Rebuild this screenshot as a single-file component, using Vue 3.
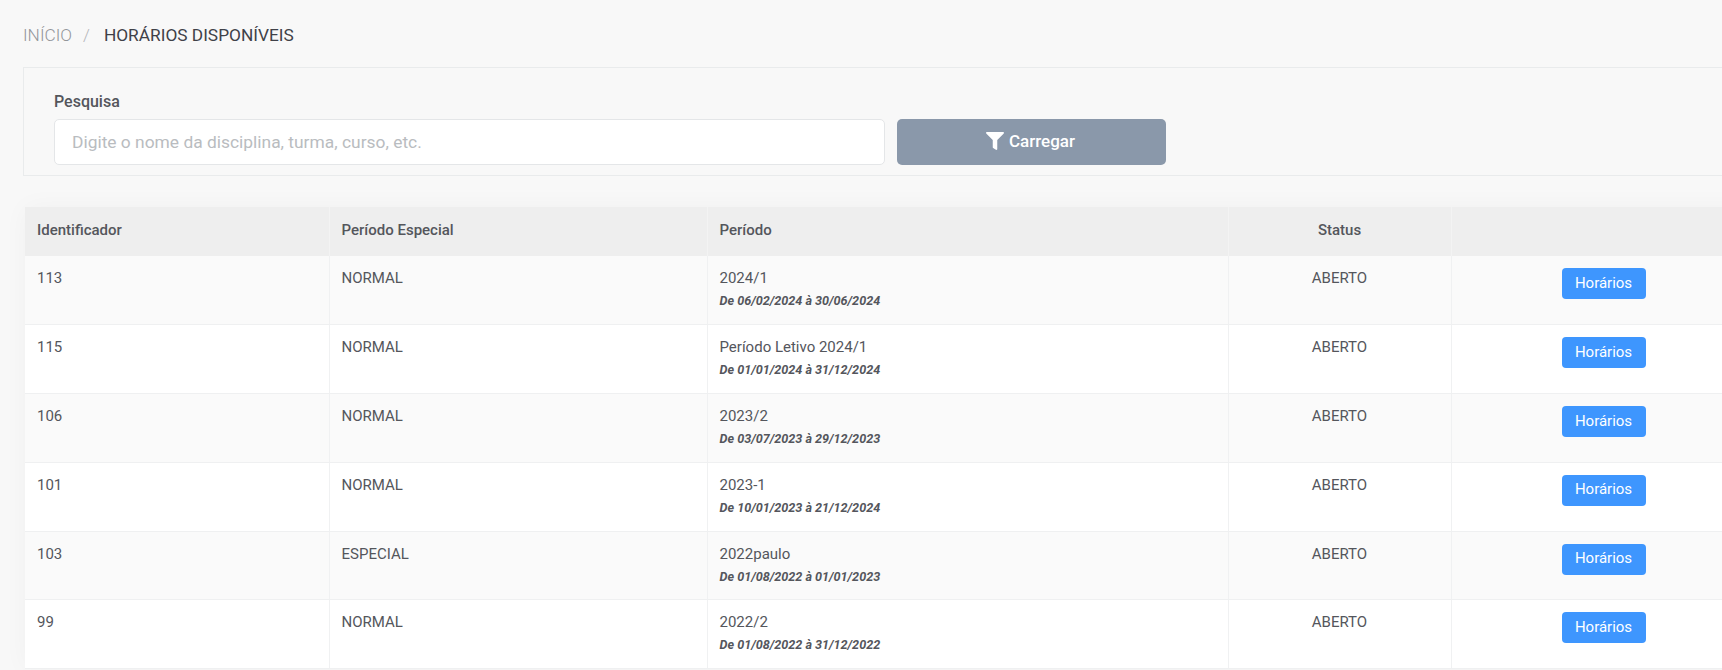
<script setup>
const rows = [
  { id: '113', tipo: 'NORMAL', periodo: '2024/1', datas: 'De 06/02/2024 à 30/06/2024' },
  { id: '115', tipo: 'NORMAL', periodo: 'Período Letivo 2024/1', datas: 'De 01/01/2024 à 31/12/2024' },
  { id: '106', tipo: 'NORMAL', periodo: '2023/2', datas: 'De 03/07/2023 à 29/12/2023' },
  { id: '101', tipo: 'NORMAL', periodo: '2023-1', datas: 'De 10/01/2023 à 21/12/2024' },
  { id: '103', tipo: 'ESPECIAL', periodo: '2022paulo', datas: 'De 01/08/2022 à 01/01/2023' },
  { id: '99', tipo: 'NORMAL', periodo: '2022/2', datas: 'De 01/08/2022 à 31/12/2022' },
]
</script>

<template>
  <div class="page">
    <nav class="crumbs">
      <span class="crumb-link">INÍCIO</span>
      <span class="crumb-sep">/</span>
      <span class="crumb-current">HORÁRIOS DISPONÍVEIS</span>
    </nav>

    <section class="panel">
      <label class="label" for="busca">Pesquisa</label>
      <div class="search-row">
        <input id="busca" class="input" type="text" placeholder="Digite o nome da disciplina, turma, curso, etc." />
        <button class="load" type="button">
          <svg class="filter" viewBox="0 0 512 512" aria-hidden="true">
            <path fill="currentColor" d="M487.976 0H24.028C2.71 0-8.047 25.866 7.058 40.971L192 225.941V432c0 7.831 3.821 15.17 10.237 19.662l80 55.98C298.02 518.69 320 507.493 320 487.98V225.941l184.947-184.97C520.021 25.896 509.338 0 487.976 0z" />
          </svg>
          <span>Carregar</span>
        </button>
      </div>
    </section>

    <table class="grid">
      <colgroup>
        <col class="c1" /><col class="c2" /><col class="c3" /><col class="c4" /><col class="c5" />
      </colgroup>
      <thead>
        <tr>
          <th>Identificador</th>
          <th>Período Especial</th>
          <th>Período</th>
          <th class="center">Status</th>
          <th></th>
        </tr>
      </thead>
      <tbody>
        <tr v-for="r in rows" :key="r.id">
          <td>{{ r.id }}</td>
          <td>{{ r.tipo }}</td>
          <td>
            <div>{{ r.periodo }}</div>
            <div class="dates">{{ r.datas }}</div>
          </td>
          <td class="center">ABERTO</td>
          <td class="center"><button class="hours" type="button">Horários</button></td>
        </tr>
      </tbody>
    </table>
  </div>
</template>

<style>
html, body { margin: 0; background: #f8f8f8; overflow: hidden; }
</style>

<style scoped>
.page {
  width: 1722px;
  height: 670px;
  overflow: hidden;
  background: #f8f8f8;
  font-family: Roboto, "Liberation Sans", sans-serif;
  font-size: 15px;
  color: #54565c;
}
.crumbs {
  display: flex;
  align-items: center;
  height: 21px;
  padding: 24px 0 22px 23px;
  font-size: 17.3px;
  font-weight: 300;
}
.crumb-link { color: #93969a; }
.crumb-sep { color: #b4b6b9; margin: 0 14px 0 11px; }
.crumb-current { color: #3f4148; font-weight: 400; }
.panel {
  box-sizing: border-box;
  width: 1760px;
  height: 109px;
  margin-left: 23px;
  padding: 23px 0 0 30px;
  border: 1px solid #e9ebec;
}
.label {
  display: block;
  height: 28px;
  font-size: 16px;
  font-weight: 500;
  line-height: 22px;
}
.search-row { display: flex; gap: 12px; }
.input {
  box-sizing: border-box;
  width: 831px;
  height: 46px;
  padding: 0 17px;
  background: #fff;
  border: 1px solid #e4e6e8;
  border-radius: 5px;
  font-family: inherit;
  font-size: 17.4px;
  color: #54565c;
  outline: none;
}
.input::placeholder { color: #b9bcc0; opacity: 1; }
.load {
  display: flex;
  align-items: center;
  justify-content: center;
  gap: 5px;
  box-sizing: border-box;
  width: 269px;
  height: 46px;
  padding: 0 2px 2px 0;
  background: #8a98aa;
  border: 0;
  border-radius: 5px;
  font-family: inherit;
  font-size: 17px;
  font-weight: 500;
  color: #fff;
}
.filter { width: 18px; height: 18px; }
.grid {
  width: 1731px;
  margin: 31px 0 0 25px;
  table-layout: fixed;
  border-collapse: collapse;
  background: #fff;
  box-shadow: 0 0 24px rgba(0, 0, 0, 0.035);
}
.c1 { width: 304px; }
.c2 { width: 378px; }
.c3 { width: 521px; }
.c4 { width: 223px; }
.c5 { width: 305px; }
th {
  box-sizing: border-box;
  height: 49px;
  padding: 0 12px 3px;
  background: #eeeeee;
  border-right: 1px solid #f3f3f3;
  font-size: 15px;
  font-weight: 500;
  text-align: left;
  color: #54565c;
}
td {
  box-sizing: border-box;
  height: 68.75px;
  padding: 12px;
  border-right: 1px solid #f0f1f2;
  border-bottom: 1px solid #eff0f1;
  vertical-align: top;
  line-height: 21px;
}
tbody tr:nth-child(odd) td { background: #fafafa; }
th.center, td.center { text-align: center; }
.dates {
  margin-top: 3px;
  font-size: 12.6px;
  font-style: italic;
  font-weight: 700;
  line-height: 18px;
}
.hours {
  display: block;
  width: 84px;
  height: 31px;
  margin: 0 auto;
  padding: 0 0 2px;
  background: #3e96fe;
  border: 0;
  border-radius: 4px;
  font-family: inherit;
  font-size: 15px;
  font-weight: 400;
  color: #fff;
}
</style>
